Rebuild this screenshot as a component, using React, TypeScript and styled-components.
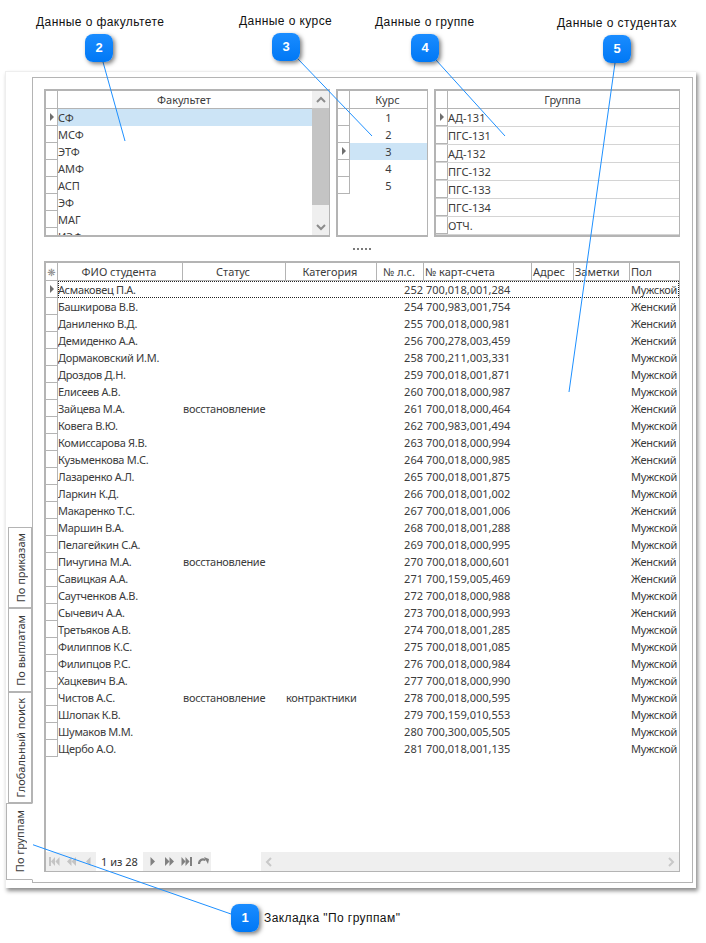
import React from 'react';
import styled, { createGlobalStyle } from 'styled-components';

const GlobalStyle = createGlobalStyle`
  html, body {
    margin: 0;
    padding: 0;
    background: #ffffff;
  }
`;

const GRID_FONT = `"Noto Sans", "DejaVu Sans", sans-serif`;
const LINE = '#b4b4b4';
const CELL_LINE = '#d4d4d4';
const TEXT = '#3c3c3c';

// Page and window frame
const Page = styled.div`
  position: relative;
  width: 706px;
  height: 943px;
  padding: 71px 0 0 5px;
  box-sizing: border-box;
  overflow: hidden;
  font-family: ${GRID_FONT};
`;

const Window = styled.div`
  width: 691px;
  height: 817px;
  box-sizing: border-box;
  padding: 5px 3px 5px 0;
  display: flex;
  background: #ffffff;
  border-top: 1px solid #eeeeee;
  border-left: 1px solid #eeeeee;
  box-shadow: 2px 3px 4px rgba(0, 0, 0, 0.45);
`;

const TabStrip = styled.div`
  width: 26px;
  flex: none;
  display: flex;
  flex-direction: column;
  justify-content: flex-end;
  align-items: flex-end;
  padding-bottom: 3px;
  box-sizing: border-box;
`;

const Tab = styled.div<{ $active?: boolean; $h: number }>`
  position: relative;
  z-index: 1;
  box-sizing: border-box;
  height: ${({ $h }) => $h}px;
  width: ${({ $active }) => ($active ? 27 : 24)}px;
  margin-right: ${({ $active }) => ($active ? -1 : 0)}px;
  background: #ffffff;
  border: 1px solid ${LINE};
  border-right: ${({ $active }) => ($active ? '1px solid #ffffff' : `1px solid ${LINE}`)};
  display: flex;
  align-items: center;
  justify-content: center;
  font-size: 11px;
  color: ${TEXT};
  white-space: nowrap;
`;

const TabLabel = styled.span`
  writing-mode: vertical-rl;
  transform: rotate(180deg);
`;

const TabPage = styled.div`
  flex: 1;
  min-width: 0;
  box-sizing: border-box;
  border: 1px solid ${LINE};
  padding: 11px 12px 10px 11px;
  display: flex;
  flex-direction: column;
`;

// Upper lookup grids
const TopRow = styled.div`
  display: flex;
  gap: 6px;
  height: 148px;
  flex: none;
`;

const Grid = styled.div<{ $w: number }>`
  width: ${({ $w }) => $w}px;
  flex: none;
  box-sizing: border-box;
  border: 1px solid ${LINE};
  border-top-width: 2px;
  border-left-width: 2px;
  border-bottom-width: 2px;
  border-right-width: 1px;
  display: flex;
  overflow: hidden;
  font-size: 11px;
  color: ${TEXT};
`;

const GridBody = styled.div`
  flex: 1;
  min-width: 0;
  display: flex;
  flex-direction: column;
`;

const HeaderRow = styled.div`
  display: flex;
  height: 18px;
  flex: none;
  box-sizing: border-box;
  border-bottom: 1px solid ${LINE};
`;

const HeadCell = styled.div<{ $w?: number; $align?: string }>`
  box-sizing: border-box;
  ${({ $w }) => ($w ? `width: ${$w}px; flex: none;` : 'flex: 1;')}
  min-width: 0;
  border-left: 1px solid ${LINE};
  padding: 0 3px 0 1px;
  line-height: 17px;
  text-align: ${({ $align }) => $align || 'center'};
  white-space: nowrap;
  overflow: hidden;
`;

const Corner = styled.div`
  width: 11px;
  flex: none;
  display: flex;
  align-items: center;
  justify-content: center;
  font-size: 10px;
  line-height: 1;
  color: #8a8a8a;
`;

const Row = styled.div<{ $h?: number; $lined?: boolean }>`
  display: flex;
  flex: none;
  height: ${({ $h }) => $h || 17}px;
  box-sizing: border-box;
  ${({ $lined }) => ($lined ? `border-bottom: 1px solid ${CELL_LINE};` : '')}
`;

const Selector = styled.div`
  width: 12px;
  flex: none;
  box-sizing: border-box;
  border-right: 1px solid ${LINE};
  border-bottom: 1px solid ${LINE};
  display: flex;
  align-items: center;
  justify-content: center;
`;

const RowArrow = styled.span`
  width: 0;
  height: 0;
  border-top: 4px solid transparent;
  border-bottom: 4px solid transparent;
  border-left: 4px solid #6e6e6e;
`;

const RowText = styled.div<{ $selected?: boolean; $align?: string }>`
  flex: 1;
  min-width: 0;
  line-height: 17px;
  white-space: nowrap;
  text-align: ${({ $align }) => $align || 'left'};
  background: ${({ $selected }) => ($selected ? '#cce4f6' : 'transparent')};
`;

const ScrollBar = styled.div`
  width: 17px;
  flex: none;
  background: #efefef;
  display: flex;
  flex-direction: column;
`;

const ScrollButton = styled.div`
  height: 17px;
  flex: none;
  display: flex;
  align-items: center;
  justify-content: center;
`;

const ScrollThumb = styled.div`
  height: 97px;
  flex: none;
  background: #c4c4c4;
`;

const ScrollGap = styled.div`
  flex: 1;
`;

const Splitter = styled.div`
  height: 24px;
  flex: none;
  display: flex;
  align-items: center;
  justify-content: center;
  gap: 2px;
`;

const SplitDot = styled.span`
  width: 2px;
  height: 2px;
  background: #7a7a7a;
`;

// Students table
const StudentsGrid = styled.div`
  flex: 1;
  min-height: 0;
  box-sizing: border-box;
  border: 1px solid ${LINE};
  border-top-width: 2px;
  border-left-width: 2px;
  display: flex;
  flex-direction: column;
  font-size: 11px;
  color: ${TEXT};
`;

const StudentsBody = styled.div`
  flex: 1;
  min-height: 0;
  display: flex;
  flex-direction: column;
`;

const StudentRow = styled.div`
  display: flex;
  height: 17px;
  flex: none;
`;

const StudentCells = styled.div<{ $focus?: boolean }>`
  flex: 1;
  min-width: 0;
  display: flex;
  box-sizing: border-box;
  ${({ $focus }) => ($focus ? 'outline: 1px dotted #222222; outline-offset: -1px;' : '')}
`;

const Cell = styled.div<{ $w: number; $left?: number; $num?: boolean }>`
  width: ${({ $w }) => $w}px;
  flex: none;
  box-sizing: border-box;
  padding: 0 1px 0 ${({ $left }) => $left || 0}px;
  line-height: 17px;
  white-space: nowrap;
  overflow: hidden;
  text-align: left;
  letter-spacing: ${({ $num }) => ($num ? 0 : -0.3)}px;
`;

const NumCell = styled(Cell)`
  text-align: right;
`;

// Pager
const Pager = styled.div`
  height: 19px;
  flex: none;
  display: flex;
`;

const PagerGroup = styled.div<{ $w: number; $left: number }>`
  width: ${({ $w }) => $w}px;
  flex: none;
  box-sizing: border-box;
  background: #efefef;
  display: flex;
  align-items: center;
  gap: 6px;
  padding-left: ${({ $left }) => $left}px;
`;

const PageCount = styled.div`
  width: 47px;
  flex: none;
  text-align: center;
  line-height: 19px;
  font-size: 11px;
  color: #333333;
`;

const PagerGap = styled.div`
  width: 50px;
  flex: none;
`;

const HScroll = styled.div`
  flex: 1;
  min-width: 0;
  background: #efefef;
  display: flex;
  align-items: center;
  justify-content: space-between;
  padding: 0 4px;
`;

// Annotations over the screenshot
const Overlay = styled.svg`
  position: absolute;
  left: 0;
  top: 0;
  width: 706px;
  height: 943px;
  pointer-events: none;
`;

const Note = styled.div<{ $x: number; $y: number }>`
  position: absolute;
  left: ${({ $x }) => $x}px;
  top: ${({ $y }) => $y}px;
  font-family: "Liberation Sans", Arial, sans-serif;
  font-size: 12px;
  line-height: 14px;
  letter-spacing: 0.42px;
  color: #111111;
  white-space: nowrap;
`;

const Badge = styled.div<{ $x: number; $y: number }>`
  position: absolute;
  left: ${({ $x }) => $x}px;
  top: ${({ $y }) => $y}px;
  width: 28px;
  height: 28px;
  border-radius: 8px;
  background: linear-gradient(#1a8cff, #0078f5);
  box-shadow: 2px 2px 4px rgba(0, 0, 0, 0.5);
  color: #ffffff;
  font-family: "Liberation Sans", Arial, sans-serif;
  font-size: 13px;
  font-weight: bold;
  line-height: 28px;
  text-align: center;
`;

// Small drawn icons
const Chevron = ({ dir, color = '#8c8c8c' }: { dir: 'up' | 'down' | 'left' | 'right'; color?: string }) => {
  const points = {
    up: '1,6 5,2 9,6',
    down: '1,2 5,6 9,2',
    left: '6,1 2,5 6,9',
    right: '2,1 6,5 2,9',
  }[dir];
  const wide = dir === 'up' || dir === 'down';
  return (
    <svg width={wide ? 10 : 8} height={wide ? 8 : 10}>
      <polyline points={points} fill="none" stroke={color} strokeWidth="2" />
    </svg>
  );
};

type PagerKind = 'first' | 'prevFast' | 'prev' | 'next' | 'nextFast' | 'last' | 'refresh';

const PagerIcon = ({ kind, color }: { kind: PagerKind; color: string }) => (
  <svg width="11" height="9" viewBox="0 0 11 9">
    {kind === 'first' && (
      <>
        <rect x="0" y="0" width="2" height="9" fill={color} />
        <polygon points="6,0 6,9 2,4.5" fill={color} />
        <polygon points="10.5,0 10.5,9 6.5,4.5" fill={color} />
      </>
    )}
    {kind === 'prevFast' && (
      <>
        <polygon points="5.5,0 5.5,9 1,4.5" fill={color} />
        <polygon points="10,0 10,9 5.5,4.5" fill={color} />
      </>
    )}
    {kind === 'prev' && <polygon points="7.5,0 7.5,9 3,4.5" fill={color} />}
    {kind === 'next' && <polygon points="3.5,0 3.5,9 8,4.5" fill={color} />}
    {kind === 'nextFast' && (
      <>
        <polygon points="1,0 1,9 5.5,4.5" fill={color} />
        <polygon points="5.5,0 5.5,9 10,4.5" fill={color} />
      </>
    )}
    {kind === 'last' && (
      <>
        <polygon points="0.5,0 0.5,9 4.5,4.5" fill={color} />
        <polygon points="4.5,0 4.5,9 8.5,4.5" fill={color} />
        <rect x="9" y="0" width="2" height="9" fill={color} />
      </>
    )}
    {kind === 'refresh' && (
      <>
        <path d="M1 7 C1 3 4 1.5 7.5 3" fill="none" stroke={color} strokeWidth="2.2" />
        <polygon points="6,0 11,2 10,7" fill={color} />
      </>
    )}
  </svg>
);

// Data
const faculties = ['СФ', 'МСФ', 'ЭТФ', 'АМФ', 'АСП', 'ЭФ', 'МАГ', 'ИЭФ'];
const courses = ['1', '2', '3', '4', '5'];
const groups = ['АД-131', 'ПГС-131', 'АД-132', 'ПГС-132', 'ПГС-133', 'ПГС-134', 'ОТЧ.'];

const columns = [
  { title: 'ФИО студента', w: 125 },
  { title: 'Статус', w: 103 },
  { title: 'Категория', w: 91 },
  { title: '№ л.с.', w: 47 },
  { title: '№ карт-счета', w: 108, align: 'left' },
  { title: 'Адрес', w: 42, align: 'left' },
  { title: 'Заметки', w: 56, align: 'left' },
  { title: 'Пол', w: 50, align: 'left' },
];

const REST = 'восстановление';
const M = 'Мужской';
const F = 'Женский';

const students: [string, string, string, number, string, string][] = [
  ['Асмаковец П.А.', '', '', 252, '700,018,001,284', M],
  ['Башкирова В.В.', '', '', 254, '700,983,001,754', F],
  ['Даниленко В.Д.', '', '', 255, '700,018,000,981', F],
  ['Демиденко А.А.', '', '', 256, '700,278,003,459', F],
  ['Дормаковский И.М.', '', '', 258, '700,211,003,331', M],
  ['Дроздов Д.Н.', '', '', 259, '700,018,001,871', M],
  ['Елисеев А.В.', '', '', 260, '700,018,000,987', M],
  ['Зайцева М.А.', REST, '', 261, '700,018,000,464', F],
  ['Ковега В.Ю.', '', '', 262, '700,983,001,494', M],
  ['Комиссарова Я.В.', '', '', 263, '700,018,000,994', F],
  ['Кузьменкова М.С.', '', '', 264, '700,018,000,985', F],
  ['Лазаренко А.Л.', '', '', 265, '700,018,001,875', M],
  ['Ларкин К.Д.', '', '', 266, '700,018,001,002', M],
  ['Макаренко Т.С.', '', '', 267, '700,018,001,006', F],
  ['Маршин В.А.', '', '', 268, '700,018,001,288', M],
  ['Пелагейкин С.А.', '', '', 269, '700,018,000,995', M],
  ['Пичугина М.А.', REST, '', 270, '700,018,000,601', F],
  ['Савицкая А.А.', '', '', 271, '700,159,005,469', F],
  ['Саутченков А.В.', '', '', 272, '700,018,000,988', M],
  ['Сычевич А.А.', '', '', 273, '700,018,000,993', F],
  ['Третьяков А.В.', '', '', 274, '700,018,001,285', M],
  ['Филиппов К.С.', '', '', 275, '700,018,001,085', M],
  ['Филипцов Р.С.', '', '', 276, '700,018,000,984', M],
  ['Хацкевич В.А.', '', '', 277, '700,018,000,990', M],
  ['Чистов А.С.', REST, 'контрактники', 278, '700,018,000,595', M],
  ['Шлопак К.В.', '', '', 279, '700,159,010,553', M],
  ['Шумаков М.М.', '', '', 280, '700,300,005,505', M],
  ['Щербо А.О.', '', '', 281, '700,018,001,135', M],
];

const tabs = [
  { label: 'По приказам', h: 81 },
  { label: 'По выплатам', h: 84 },
  { label: 'Глобальный поиск', h: 111 },
  { label: 'По группам', h: 77, active: true },
];

const notes = [
  { text: 'Данные о факультете', x: 36, y: 15 },
  { text: 'Данные о курсе', x: 239, y: 14 },
  { text: 'Данные о группе', x: 375, y: 15 },
  { text: 'Данные о студентах', x: 557, y: 16 },
  { text: 'Закладка "По группам"', x: 264, y: 911 },
];

const badges = [
  { n: 1, x: 231, y: 904 },
  { n: 2, x: 85, y: 34 },
  { n: 3, x: 272, y: 33 },
  { n: 4, x: 411, y: 34 },
  { n: 5, x: 603, y: 35 },
];

const leaders = [
  [231, 914, 28, 843],
  [103, 62, 125, 141],
  [298, 59, 372, 136],
  [436, 60, 505, 136],
  [615, 63, 569, 392],
];

const App = () => {
  return (
    <Page>
      <GlobalStyle />
      <Window>
        <TabStrip>
          {tabs.map((tab) => (
            <Tab key={tab.label} $h={tab.h} $active={tab.active}>
              <TabLabel>{tab.label}</TabLabel>
            </Tab>
          ))}
        </TabStrip>
        <TabPage>
          <TopRow>
            <Grid $w={286}>
              <GridBody>
                <HeaderRow>
                  <Corner />
                  <HeadCell>Факультет</HeadCell>
                </HeaderRow>
                {faculties.map((name, i) => (
                  <Row key={name}>
                    <Selector>{i === 0 && <RowArrow />}</Selector>
                    <RowText $selected={i === 0}>{name}</RowText>
                  </Row>
                ))}
              </GridBody>
              <ScrollBar>
                <ScrollButton>
                  <Chevron dir="up" />
                </ScrollButton>
                <ScrollThumb />
                <ScrollGap />
                <ScrollButton>
                  <Chevron dir="down" />
                </ScrollButton>
              </ScrollBar>
            </Grid>
            <Grid $w={92}>
              <GridBody>
                <HeaderRow>
                  <Corner />
                  <HeadCell>Курс</HeadCell>
                </HeaderRow>
                {courses.map((name, i) => (
                  <Row key={name}>
                    <Selector>{i === 2 && <RowArrow />}</Selector>
                    <RowText $selected={i === 2} $align="center">
                      {name}
                    </RowText>
                  </Row>
                ))}
              </GridBody>
            </Grid>
            <Grid $w={246}>
              <GridBody>
                <HeaderRow>
                  <Corner />
                  <HeadCell>Группа</HeadCell>
                </HeaderRow>
                {groups.map((name, i) => (
                  <Row key={name} $h={18} $lined>
                    <Selector>{i === 0 && <RowArrow />}</Selector>
                    <RowText>{name}</RowText>
                  </Row>
                ))}
              </GridBody>
            </Grid>
          </TopRow>
          <Splitter>
            {[0, 1, 2, 3, 4].map((i) => (
              <SplitDot key={i} />
            ))}
          </Splitter>
          <StudentsGrid>
            <HeaderRow>
              <Corner>❋</Corner>
              {columns.map((col) => (
                <HeadCell key={col.title} $w={col.w} $align={col.align}>
                  {col.title}
                </HeadCell>
              ))}
            </HeaderRow>
            <StudentsBody>
              {students.map(([name, status, category, account, card, sex], i) => (
                <StudentRow key={name}>
                  <Selector>{i === 0 && <RowArrow />}</Selector>
                  <StudentCells $focus={i === 0}>
                    <Cell $w={125}>{name}</Cell>
                    <Cell $w={103}>{status}</Cell>
                    <Cell $w={91}>{category}</Cell>
                    <NumCell $w={47} $num>
                      {account}
                    </NumCell>
                    <Cell $w={206} $left={2} $num>
                      {card}
                    </Cell>
                    <Cell $w={50} $left={1}>
                      {sex}
                    </Cell>
                  </StudentCells>
                </StudentRow>
              ))}
            </StudentsBody>
            <Pager>
              <PagerGroup $w={50} $left={3}>
                <PagerIcon kind="first" color="#c4c4c4" />
                <PagerIcon kind="prevFast" color="#c4c4c4" />
                <PagerIcon kind="prev" color="#c4c4c4" />
              </PagerGroup>
              <PageCount>1 из 28</PageCount>
              <PagerGroup $w={68} $left={4}>
                <PagerIcon kind="next" color="#808080" />
                <PagerIcon kind="nextFast" color="#808080" />
                <PagerIcon kind="last" color="#808080" />
                <PagerIcon kind="refresh" color="#808080" />
              </PagerGroup>
              <PagerGap />
              <HScroll>
                <Chevron dir="left" color="#c8c8c8" />
                <Chevron dir="right" color="#c8c8c8" />
              </HScroll>
            </Pager>
          </StudentsGrid>
        </TabPage>
      </Window>
      {notes.map((note) => (
        <Note key={note.text} $x={note.x} $y={note.y}>
          {note.text}
        </Note>
      ))}
      <Overlay viewBox="0 0 706 943">
        {leaders.map(([x1, y1, x2, y2]) => (
          <line key={`${x1}-${y1}`} x1={x1} y1={y1} x2={x2} y2={y2} stroke="#1e90ff" strokeWidth="1" />
        ))}
      </Overlay>
      {badges.map((badge) => (
        <Badge key={badge.n} $x={badge.x} $y={badge.y}>
          {badge.n}
        </Badge>
      ))}
    </Page>
  );
};

export default App;
